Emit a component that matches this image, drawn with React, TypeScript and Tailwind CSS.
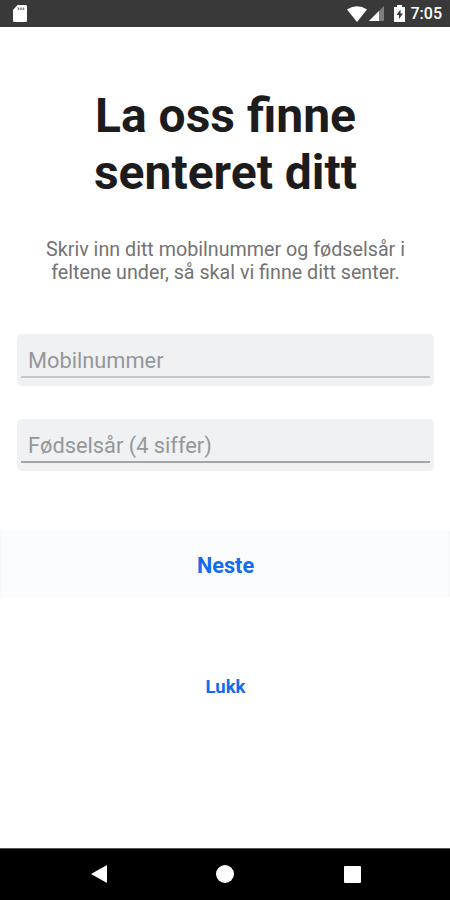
import clsx from 'clsx';

function StatusBar() {
  return (
    <div className="flex h-[27px] items-center justify-between bg-[#393939] pr-2 pl-[13px] text-white">
      <svg width="14" height="17" viewBox="0 0 14 17" fill="currentColor">
        <path d="M4.500 0h8A1.500 1.500 0 0 1 14 1.500v14a1.500 1.500 0 0 1-1.500 1.500h-11A1.500 1.500 0 0 1 0 15.500V5z" />
        <path d="M5.500 2.500v2.500M8 2.500v2.500M10.500 2.500v2.500" stroke="#777" strokeWidth="1.500" />
      </svg>
      <div className="flex items-center">
        <svg width="20" height="16" viewBox="0 0 20 16" fill="currentColor">
          <path d="M0 3.500Q10-3 20 3.500L10 16z" />
        </svg>
        <svg className="ml-0.5" width="15" height="15" viewBox="0 0 15 15" fill="currentColor">
          <path d="M15 0v15H0z" opacity=".35" />
          <path d="M10 5v10H0z" />
        </svg>
        <svg className="ml-2.5" width="11" height="17" viewBox="0 0 11 17" fill="currentColor">
          <path d="M3 0h5v2h3v15H0V2h3z" />
          <path d="M6.500 4.500L2.500 10H5v4l4-5.500H6.500z" fill="#393939" />
        </svg>
        <span className="ml-1.5 pt-px text-[16px] leading-none font-medium">7:05</span>
      </div>
    </div>
  );
}

function Field({ label, active }: { label: string; active?: boolean }) {
  return (
    <div className="h-[52px] rounded-[5px] bg-[#eff1f3] px-1">
      <div
        className={clsx(
          'flex h-[44px] items-center border-b-2 px-[7px] pt-[13px] text-[21.800px] text-[#959799]',
          active ? 'border-[#a3a7a9]' : 'border-[#c4c6c8]',
        )}
      >
        {label}
      </div>
    </div>
  );
}

export default function App() {
  return (
    <div className="flex h-[900px] w-[450px] flex-col bg-white font-['Roboto',sans-serif]">
      <StatusBar />
      <main className="flex flex-1 flex-col">
        <h1 className="mt-[60px] pl-px text-center text-[48px] leading-[57px] font-bold text-[#1c1c1d]">
          La oss finne
          <br />
          senteret ditt
        </h1>
        <p className="mt-[37px] pl-px text-center text-[19.700px] leading-[23px] text-[#737373]">
          Skriv inn ditt mobilnummer og fødselsår i
          <br />
          feltene under, så skal vi finne ditt senter.
        </p>
        <div className="mt-[50px] flex flex-col gap-[33px] pr-4 pl-[17px]">
          <Field label="Mobilnummer" />
          <Field label="Fødselsår (4 siffer)" active />
        </div>
        <button className="mt-[60px] h-[66px] border-x border-[#f6f7f9] bg-[#fafcfe] pt-1 pl-px text-[21.700px] font-bold text-[#126bf1]">
          Neste
        </button>
        <button className="mt-[75px] h-8 pl-px text-[18.500px] font-bold text-[#126bf1]">Lukk</button>
      </main>
      <nav className="flex h-[52px] items-center justify-between border-t border-[#555] bg-black pr-[89px] pb-px pl-[91px] text-white">
        <svg width="16" height="18" viewBox="0 0 16 18" fill="currentColor">
          <path d="M16 0v18L0 9z" />
        </svg>
        <span className="mr-px size-[18px] rounded-full bg-white" />
        <span className="size-[17px] rounded-[1px] bg-white" />
      </nav>
    </div>
  );
}
